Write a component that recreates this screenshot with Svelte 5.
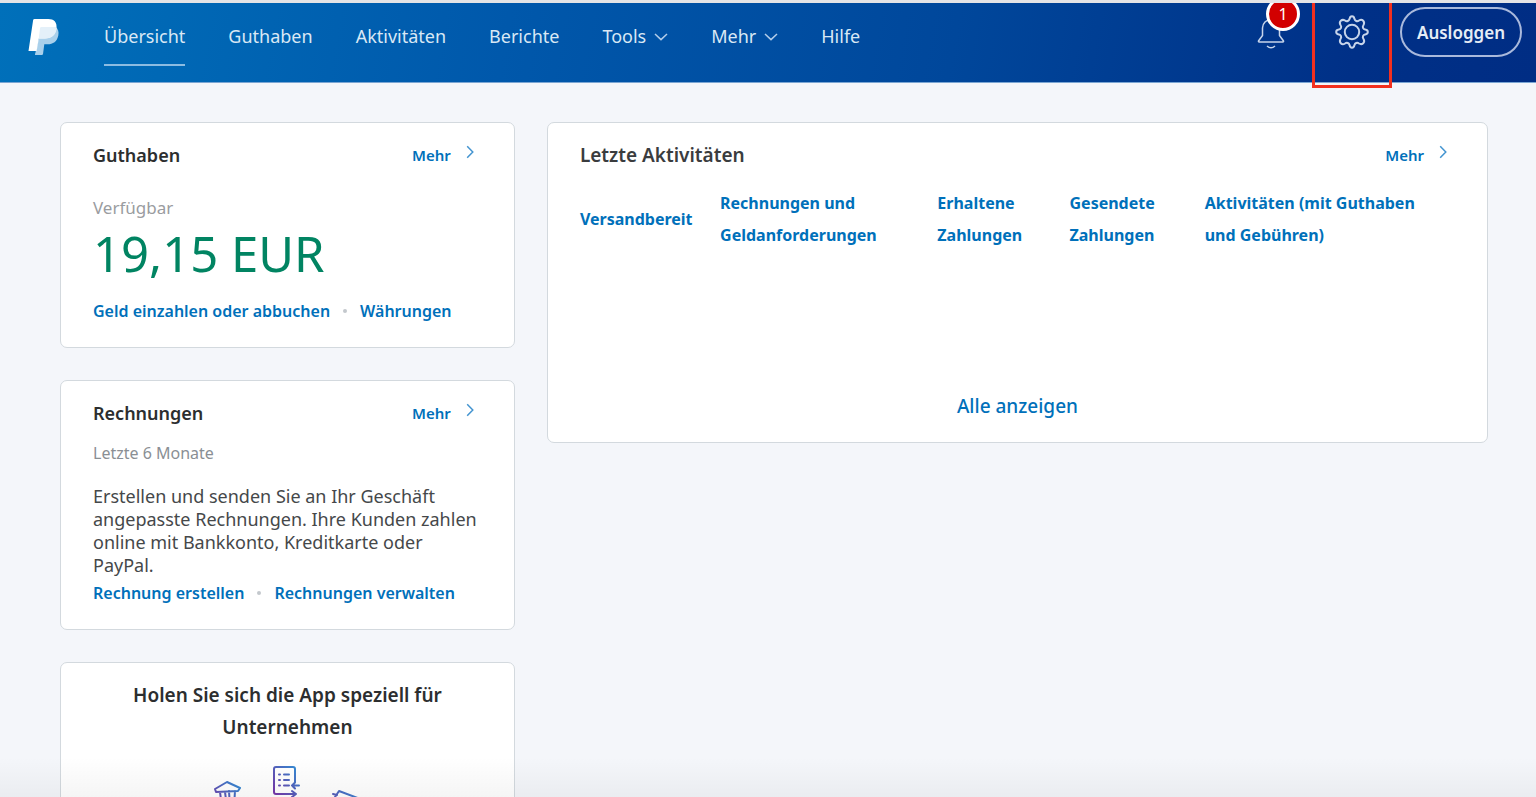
<script lang="ts">
    interface NavItem {
        label: string;
        active?: boolean;
        menu?: boolean;
    }

    const navItems: NavItem[] = [
        { label: "Übersicht", active: true },
        { label: "Guthaben" },
        { label: "Aktivitäten" },
        { label: "Berichte" },
        { label: "Tools", menu: true },
        { label: "Mehr", menu: true },
        { label: "Hilfe" },
    ];

    const filters = [
        "Versandbereit",
        "Rechnungen und Geldanforderungen",
        "Erhaltene Zahlungen",
        "Gesendete Zahlungen",
        "Aktivitäten (mit Guthaben und Gebühren)",
    ];

    let notifications = $state(1);
</script>

{#snippet cardHead(title: string)}
    <div class="card-head">
        <h2>{title}</h2>
        <a class="more" href="#mehr">
            Mehr
            <svg width="8" height="14" viewBox="0 0 8 14" aria-hidden="true">
                <path d="M1.2 1.2 6.8 7 1.2 12.8" />
            </svg>
        </a>
    </div>
{/snippet}

{#snippet links(first: string, second: string)}
    <div class="links">
        <a href="#first">{first}</a>
        <span class="dot"></span>
        <a href="#second">{second}</a>
    </div>
{/snippet}

<div class="page">
    <header>
        <a class="logo" href="#home" aria-label="PayPal">
            <svg width="32" height="37" viewBox="0 0 32 37">
                <path fill="#a9d0eb" d="M13 8h14.5c2.6 1.8 3.6 4.8 2.8 8.4-1.2 6-5.2 8.8-10.8 8.8h-3.2L15 35q-.2 1-1.200 1H7l.8-4z" />
                <path fill="#fff" d="M6.500 0h13.800c5.600 0 9 3.200 8.200 9.300C27.500 16 23.300 19.500 17 19.500h-6.200L8.700 32H.5L5.100 1.200Q5.300 0 6.500 0z" />
                <path fill="#e4f0f9" d="M13.200 8h14.600q1 1 .7 2.500C27.300 16.300 23.300 19.500 17 19.500h-6.200L12 9.200Q12.200 8 13.200 8z" />
                <path fill="#a9d0eb" d="m10.800 19.500-3 16.500H7l1.700-4z" />
            </svg>
        </a>

        <nav>
            {#each navItems as item}
                <a href="#nav" class:active={item.active}>
                    {item.label}
                    {#if item.menu}
                        <svg width="14" height="8" viewBox="0 0 14 8" aria-hidden="true">
                            <path d="m1 1 6 5.600L13 1" />
                        </svg>
                    {/if}
                </a>
            {/each}
        </nav>

        <div class="actions">
            <button class="bell" aria-label="Benachrichtigungen" onclick={() => (notifications = 0)}>
                <svg width="28" height="34" viewBox="0 0 28 34" aria-hidden="true">
                    <path d="M5.500 20.500V13a8.500 8.500 0 0 1 17 0v7.500L26.500 26a.7.7 0 0 1-.6 1H2.100a.7.700 0 0 1-.6-1zM10 31q4 3.600 8 0" />
                </svg>
                {#if notifications}
                    <span class="badge">{notifications}</span>
                {/if}
            </button>
            <button class="settings" aria-label="Einstellungen">
                <svg width="34" height="34" viewBox="-17 -17 34 34" aria-hidden="true">
                    <circle r="7.200" />
                    <path
                        d="M-2.400-13.200Q-2-15.800 0-15.800T2.400-13.200Q2.800-11.600 4.200-11T7-11.500Q9.500-13 11.200-11.200T11.500-7Q10.400-5.600 11-4.200T13.200-2.400Q15.800-2 15.800 0T13.200 2.400Q11.600 2.800 11 4.200T11.500 7Q13 9.500 11.200 11.200T7 11.500Q5.600 10.400 4.200 11T2.400 13.200Q2 15.800 0 15.800T-2.400 13.200Q-2.800 11.600-4.200 11T-7 11.500Q-9.500 13-11.200 11.200T-11.500 7Q-10.400 5.600-11 4.200T-13.200 2.400Q-15.800 2-15.800 0T-13.200-2.400Q-11.600-2.800-11-4.200T-11.500-7Q-13-9.500-11.200-11.200T-7-11.500Q-5.600-10.400-4.200-11T-2.400-13.200z"
                    />
                </svg>
            </button>
            <button class="logout">Ausloggen</button>
        </div>
    </header>

    <main>
        <div class="column">
            <section class="card">
                {@render cardHead("Guthaben")}
                <p class="label">Verfügbar</p>
                <p class="amount">19,15 EUR</p>
                {@render links("Geld einzahlen oder abbuchen", "Währungen")}
            </section>

            <section class="card">
                {@render cardHead("Rechnungen")}
                <p class="period">Letzte 6 Monate</p>
                <p class="text">
                    Erstellen und senden Sie an Ihr Geschäft angepasste Rechnungen. Ihre Kunden zahlen
                    online mit Bankkonto, Kreditkarte oder PayPal.
                </p>
                {@render links("Rechnung erstellen", "Rechnungen verwalten")}
            </section>

            <section class="card app">
                <h2>Holen Sie sich die App speziell für Unternehmen</h2>
                <svg width="150" height="90" viewBox="0 0 150 90" aria-hidden="true">
                    <defs>
                        <linearGradient id="ink" x1="0" y1="1" x2="1" y2="0">
                            <stop offset="0" stop-color="#7b2fa6" />
                            <stop offset="0.5" stop-color="#5560bb" />
                            <stop offset="1" stop-color="#2f8fd6" />
                        </linearGradient>
                    </defs>
                    <g fill="none" stroke-width="2" stroke-linejoin="round" stroke-linecap="round">
                        <path stroke="url(#ink)" d="M83 17V4q0-2-2-2H64q-2 0-2 2v23q0 2 2 2h20M80 26l4 3-4 3M67 9.500h1M72 9.500h5M67 15h1M72 15h5M67 20.500h1M72 20.500h5M87 20.500h-7m3-3-3 3 3 3" />
                        <path stroke="url(#ink)" d="M3 24 15 17l13 6-2 3-22 1zM8 27l2 15M13 27l2 15M17 26l1 16M23 26l-1 16M3 43h24" />
                        <path stroke="url(#ink)" d="m123 32 4-6 24 9-6 18-26-9zM121 29l4 1" />
                    </g>
                </svg>
            </section>
        </div>

        <section class="card activity">
            {@render cardHead("Letzte Aktivitäten")}
            <div class="filters">
                {#each filters as filter}
                    <a href="#filter">{filter}</a>
                {/each}
            </div>
            <a class="all" href="#alle">Alle anzeigen</a>
        </section>
    </main>
</div>

<style>
    :global(body) {
        background: #f4f6fa;
    }

    .page {
        position: relative;
        box-sizing: border-box;
        height: 100vh;
        overflow: hidden;
        border-top: 3px solid #e4e4e6;
        color: #2c2e2f;
        font-family: "Noto Sans", "Open Sans", sans-serif;
        font-size: 16px;
    }
    .page::after {
        content: "";
        position: absolute;
        inset: auto 0 0;
        height: 40px;
        background: linear-gradient(transparent, rgba(0, 0, 0, 0.04));
        pointer-events: none;
    }

    a {
        color: #0070ba;
        text-decoration: none;
    }
    a:hover {
        text-decoration: underline;
    }
    h2, p {
        margin: 0;
    }
    h2 {
        font-size: 18px;
        font-weight: 600;
        line-height: 32px;
    }
    svg {
        flex: none;
    }

    /* Header */
    header {
        display: flex;
        align-items: flex-start;
        height: 80px;
        padding: 0 14px 0 28px;
        border-bottom: 1px solid #7ba6d3;
        box-sizing: border-box;
        background: linear-gradient(100deg, #0070ba, #0058ab 33%, #00479b 62%, #003087 88%, #002d84);
    }
    .logo {
        margin: 16px 44px 0 0;
    }
    .logo svg {
        display: block;
    }
    nav {
        display: flex;
        gap: 43px;
        margin-top: 15px;
    }
    nav a {
        display: flex;
        align-items: flex-start;
        gap: 8px;
        height: 46px;
        border-bottom: 2px solid transparent;
        color: #d9e8f5;
        font-size: 18px;
        line-height: 36px;
    }
    nav a.active {
        border-color: #8cbce2;
    }
    nav svg {
        margin-top: 15px;
        fill: none;
        stroke: #b3cde9;
        stroke-width: 1.500;
    }

    .actions {
        display: flex;
        align-items: flex-start;
        margin-left: auto;
    }
    button {
        padding: 0;
        border: 0;
        background: none;
        color: #e6edf6;
        font: inherit;
        cursor: pointer;
    }
    .actions svg {
        display: block;
        fill: none;
        stroke: #c6d4ea;
        stroke-width: 1.500;
    }
    .bell {
        position: relative;
        margin: 12px 27px 0 0;
    }
    .badge {
        position: absolute;
        top: -18px;
        left: 9px;
        width: 28px;
        height: 28px;
        border: 3px solid #fff;
        border-radius: 50%;
        background: #d20000;
        color: #fff;
        font-size: 16px;
        line-height: 28px;
    }
    .settings {
        display: flex;
        justify-content: center;
        align-items: center;
        box-sizing: border-box;
        width: 80px;
        height: 85px;
        margin-right: 8px;
        padding-bottom: 24px;
        border: solid #f2301f;
        border-width: 0 3px 3px;
    }
    .settings svg {
        stroke-width: 2;
    }
    .logout {
        height: 50px;
        margin-top: 4px;
        padding: 0 15px;
        border: 2px solid #a9b9dc;
        border-radius: 25px;
        font-size: 17px;
        font-weight: 600;
    }

    /* Cards */
    main {
        display: grid;
        grid-template-columns: 29fr 60fr;
        align-items: start;
        gap: 32px;
        padding: 39px 48px 32px 60px;
    }
    .column {
        display: grid;
        gap: 32px;
    }
    .card {
        padding: 16px 32px 20px;
        border: 1px solid #d3d9de;
        border-radius: 7px;
        background: #fff;
    }
    .card-head {
        display: flex;
        justify-content: space-between;
    }
    .more {
        display: flex;
        gap: 15px;
        margin-right: 8px;
        font-size: 15px;
        font-weight: 600;
        line-height: 32px;
    }
    .more svg {
        margin-top: 6px;
        fill: none;
        stroke: #4394d0;
        stroke-width: 1.500;
    }

    .label {
        margin-top: 25px;
        color: #9a9c9f;
        font-size: 17px;
        line-height: 24px;
    }
    .amount {
        color: #018462;
        font-size: 49px;
        line-height: 66px;
    }
    .links {
        display: flex;
        align-items: center;
        gap: 13px;
        font-size: 16px;
        font-weight: 600;
        line-height: 32px;
        white-space: nowrap;
    }
    .amount + .links {
        margin-top: 9px;
    }
    .dot {
        width: 4px;
        height: 4px;
        border-radius: 50%;
        background: #c3c8cd;
    }

    .period {
        margin-top: 12px;
        color: #8a8f94;
        font-size: 16px;
        line-height: 24px;
    }
    .text {
        margin-top: 20px;
        color: #45484a;
        font-size: 18px;
        line-height: 23px;
    }

    .app {
        text-align: center;
    }
    .app h2,
    .activity h2 {
        font-size: 19px;
    }
    .app h2 {
        padding: 0 32px;
    }
    .app svg {
        margin-top: 22px;
    }

    .activity {
        display: flex;
        flex-direction: column;
    }
    .activity h2 {
        color: #3a3c3e;
    }
    .filters {
        display: grid;
        grid-template-columns: 140fr 217fr 132fr 135fr 250fr;
        align-items: center;
        margin-top: 16px;
    }
    .filters a {
        padding-right: 20px;
        font-size: 16px;
        font-weight: 700;
        line-height: 32px;
    }
    .all {
        align-self: center;
        margin-top: 139px;
        font-size: 19px;
        font-weight: 500;
        line-height: 32px;
    }
</style>
